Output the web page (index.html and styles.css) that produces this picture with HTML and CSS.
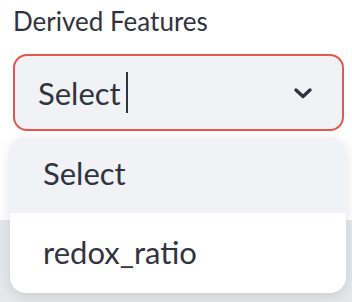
FILE: index.html
```html
<!DOCTYPE html>
<html lang="en">
  <head>
    <meta charset="UTF-8" />
    <meta name="viewport" content="width=device-width, initial-scale=1.0" />
    <title>Derived Features</title>
    <link rel="stylesheet" href="styles.css">
  </head>
  <body>
    <div class="widget">
      <label class="widget-label" for="derived">Derived Features</label>

      <div class="select-box">
        <span class="select-value">Select</span><span class="caret"></span>
        <svg class="chevron" width="20" height="12" viewBox="0 0 20 12">
          <path d="M3 3 L10 9.5 L17 3" fill="none" stroke="#31333f" stroke-width="3.4" stroke-linecap="round" stroke-linejoin="round" />
        </svg>
      </div>

      <div class="next-field"></div>

      <ul class="dropdown">
        <li class="option active">Select</li>
        <li class="option">redox_ratio</li>
      </ul>
    </div>
  </body>
</html>
```

FILE: styles.css
```css
body {
  margin: 0;
  background: white;
  font-family: Lato, "Open Sans", sans-serif;
  color: #31333f;
  overflow: hidden;
}
.widget {
  position: relative;
  height: 302px;
}
.widget-label {
  display: block;
  padding: 5px 0 0 13px;
  height: 54px;
  box-sizing: border-box;
  font-size: 26px;
  line-height: 32px;
}
.select-box {
  display: flex;
  align-items: center;
  margin: 0 8px 0 13px;
  height: 77px;
  box-sizing: border-box;
  padding: 0 29px 0 23px;
  border: 2px solid #e8574d;
  border-radius: 14px;
  background: #f0f2f6;
}
.select-value {
  font-size: 31px;
}
.caret {
  width: 2px;
  height: 41px;
  margin-left: 5px;
  background: #31333f;
}
.chevron {
  margin-left: auto;
}
.next-field {
  margin-top: 89px;
  height: 90px;
  background: #e7e8ec;
}
.dropdown {
  position: absolute;
  top: 137px;
  left: 10px;
  width: 336px;
  margin: 0;
  padding: 0;
  list-style: none;
  background: white;
  border-radius: 16px;
  overflow: hidden;
  box-shadow: 0 4px 14px rgba(0, 0, 0, 0.12);
}
.option {
  height: 80px;
  padding-left: 33px;
  font-size: 31px;
  line-height: 78px;
}
.option.active {
  height: 76px;
  line-height: 72px;
  background: #f0f2f6;
}
```
